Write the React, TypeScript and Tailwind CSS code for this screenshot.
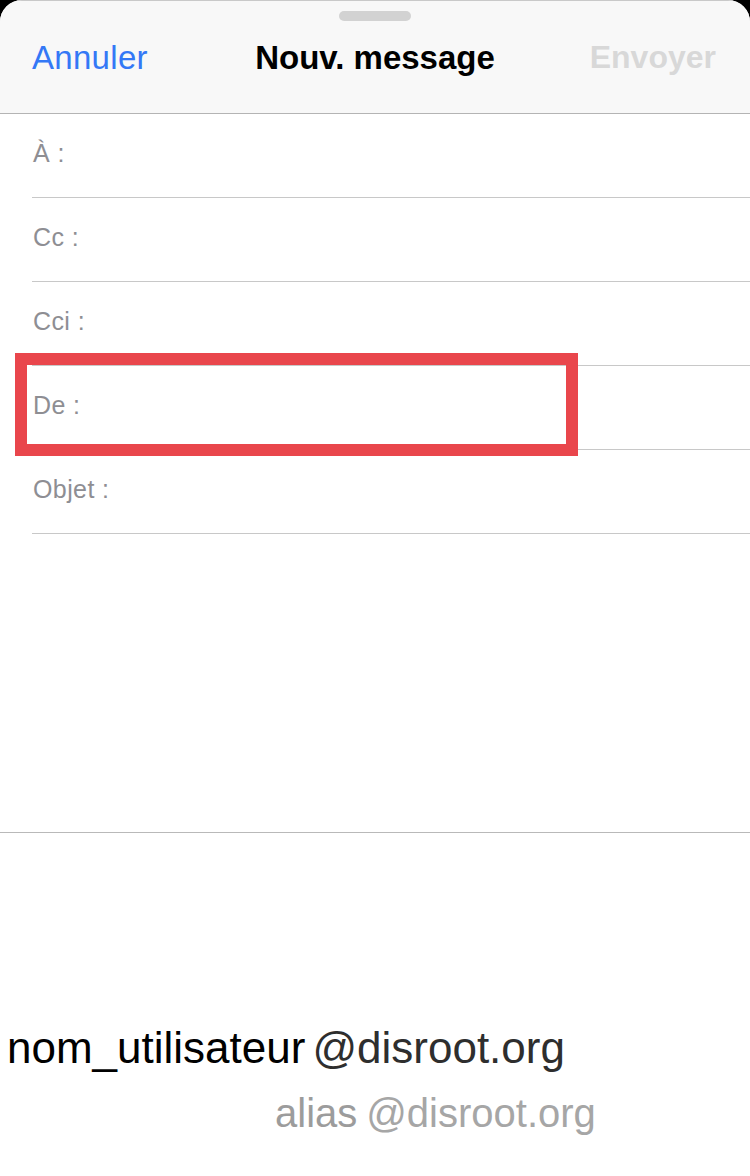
import React from "react";

const rows = ["À :", "Cc :", "Cci :", "De :", "Objet :"];

export default function App() {
  return (
    <div
      className="w-[750px] h-[1176px] bg-black overflow-hidden"
      style={{ fontFamily: '"Liberation Sans", Arial, sans-serif' }}
    >
      <div className="relative h-full w-full bg-white rounded-t-[22px] overflow-hidden flex flex-col">
        {/* Header */}
        <div className="relative h-[114px] shrink-0 bg-[#f8f8f8] border-b border-[#b4b4b4] border-t border-t-[#c9c9c9]">
          <div className="absolute left-[339px] top-[10px] w-[72px] h-[10px] rounded-full bg-[#d2d2d2]" />
          <div className="grid grid-cols-3 items-center h-full">
            <div className="pl-[32px] text-[33px] text-[#3478f6] leading-none tracking-[0.3px]">Annuler</div>
            <div className="flex justify-center text-[33px] font-bold text-black leading-none whitespace-nowrap">
              Nouv. message
            </div>
            <div className="flex justify-end pr-[34px] text-[32px] font-bold text-[#d8d8d8] leading-none">
              Envoyer
            </div>
          </div>
        </div>

        {/* Fields */}
        <div className="flex flex-col">
          {rows.map((r) => (
            <div
              key={r}
              className="ml-[32px] h-[84px] border-b border-[#c8c8c8] flex items-center pb-[5px]"
            >
              <span className="pl-[1px] text-[25px] text-[#8e8e93] leading-none tracking-[0.4px]">{r}</span>
            </div>
          ))}
        </div>

        <div className="flex-1" />

        {/* Picker */}
        <div className="h-[344px] shrink-0 border-t border-[#b9b9b9] flex flex-col pt-[193px]">
          <div className="flex items-start leading-none whitespace-nowrap">
            <span className="ml-[7px] text-[44px] text-black">nom_utilisateur</span>
            <span className="ml-[7px] text-[44px] text-[#2e2e2e]">@disroot.org</span>
          </div>
          <div className="flex items-start leading-none whitespace-nowrap mt-[23px]">
            <span className="ml-[275px] text-[40px] text-[#9c9c9c]">alias</span>
            <span className="ml-[9px] text-[40px] text-[#a6a6a6]">@disroot.org</span>
          </div>
        </div>

        {/* Highlight box */}
        <div className="absolute left-[15px] top-[353px] w-[563px] h-[103px] border-[12px] border-[#e9464c] pointer-events-none" />
      </div>
    </div>
  );
}
